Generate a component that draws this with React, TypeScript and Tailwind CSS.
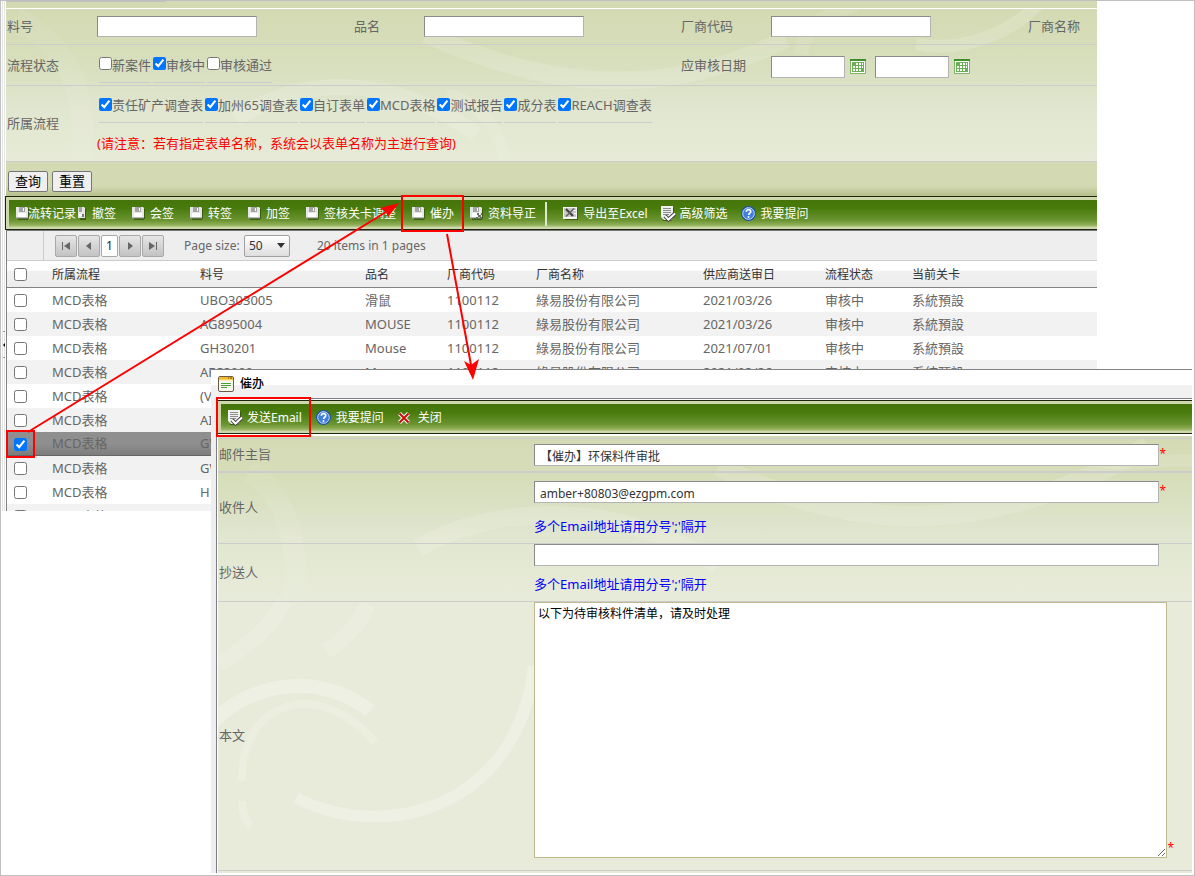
import { useState } from "react";
import type { ReactNode } from "react";

type Row = {
  id: number;
  partNo: string;
  name: string;
  code: string;
  vendor: string;
  date: string;
  status: string;
  step: string;
};

const vendorName = "綠易股份有限公司";

const rows: Row[] = [
  { id: 1, partNo: "UBO303005", name: "滑鼠", code: "1100112", vendor: vendorName, date: "2021/03/26", status: "审核中", step: "系統預設" },
  { id: 2, partNo: "AG895004", name: "MOUSE", code: "1100112", vendor: vendorName, date: "2021/03/26", status: "审核中", step: "系統預設" },
  { id: 3, partNo: "GH30201", name: "Mouse", code: "1100112", vendor: vendorName, date: "2021/07/01", status: "审核中", step: "系統預設" },
  { id: 4, partNo: "AFC2000", name: "M", code: "1100112", vendor: vendorName, date: "2021/03/26", status: "审核中", step: "系統預設" },
  { id: 5, partNo: "(V", name: "", code: "", vendor: "", date: "", status: "", step: "" },
  { id: 6, partNo: "AI", name: "", code: "", vendor: "", date: "", status: "", step: "" },
  { id: 7, partNo: "GW", name: "", code: "", vendor: "", date: "", status: "", step: "" },
  { id: 8, partNo: "GW", name: "", code: "", vendor: "", date: "", status: "", step: "" },
  { id: 9, partNo: "H", name: "", code: "", vendor: "", date: "", status: "", step: "" },
  { id: 10, partNo: "", name: "", code: "", vendor: "", date: "", status: "", step: "" },
];

const statusList = [
  { label: "新案件", checked: false },
  { label: "审核中", checked: true },
  { label: "审核通过", checked: false },
];

const flowList = ["责任矿产调查表", "加州65调查表", "自订表单", "MCD表格", "测试报告", "成分表", "REACH调查表"];

const inputStyle =
  "border border-t-[#8a8a8a] border-l-[#8a8a8a] border-r-[#b4b4b4] border-b-[#b4b4b4] bg-white text-xs text-[#333] focus:outline-none";

const panelBg =
  "bg-[linear-gradient(to_bottom,#d3dab3_0px,#d6ddb9_40px,#dbe2c5_75px,#e1e6d0_100px,#e4e9d4_130px,#e8ebda_170px)]";

/* ---------- Icons ---------- */

const SaveIcon = ({ mark = false }: { mark?: boolean }) => (
  <svg width="13" height="13" viewBox="0 0 13 13" className="shrink-0" aria-hidden="true">
    <path d="M2 2h11v10h-1v1H2z" fill="#2c4a08" opacity=".7" />
    <path d="M0 0h11l1 1v10H0z" fill="#e6e6e6" />
    <path d="M3 0h6v5H3z" fill="#a4a4a4" />
    <path d="M7 1h1v3H7z" fill="#fff" />
    <path d="M2 6h8v4H2z" fill="#fff" />
    <path d="M0 11h12" stroke="#8c8c8c" />
    {mark && <path d="M7 6h2v2h2V6h1v2h-1v2h1v2h-2v-2H8v2H6v-2h2V8H7z" fill="#6b6b6b" />}
  </svg>
);

const SaveIconHalf = () => (
  <svg width="8" height="13" viewBox="0 0 8 13" className="shrink-0" aria-hidden="true">
    <path d="M2 2h6v11H2z" fill="#2c4a08" opacity=".7" />
    <path d="M0 0h6l1 1v10H0z" fill="#e6e6e6" />
    <path d="M1 0h3v5H1z" fill="#a4a4a4" />
    <path d="M1 7h3v2H1z" fill="#fff" />
    <path d="M4 7h2v3H4z" fill="#777" />
  </svg>
);

const ExcelIcon = () => (
  <svg width="15" height="13" viewBox="0 0 15 13" className="shrink-0" aria-hidden="true">
    <path d="M2 2h13v11H2z" fill="#2c4a08" opacity=".7" />
    <path d="M0 0h14v12H0z" fill="#f4f4f4" />
    <path d="M1 1h12v10H1z" fill="#c9c9c9" />
    <path d="M1 10h12v1H1z" fill="#fff" />
    <path d="M3 2l7 7" stroke="#444" strokeWidth="2.200" />
    <path d="M11 1.500L3 9.500" stroke="#666" strokeWidth="1.600" />
    <path d="M10.500 3.500H13M11 6.500h2" stroke="#fff" />
  </svg>
);

const DocCheckIcon = () => (
  <svg width="15" height="16" viewBox="0 0 15 16" className="shrink-0" aria-hidden="true">
    <path d="M2 2h11v9l-3 4H2z" fill="#2c4a08" opacity=".7" />
    <path d="M0 0h12v12l-2 2H3l-3-3z" fill="#f0f0f0" />
    <path d="M2 2.500h8M2 4.500h8M2 6.500h8M2 8.500h6" stroke="#8d8d8d" />
    <path d="M4 10l3.500 3.500L14 7.500" fill="none" stroke="#444" strokeWidth="4" />
    <path d="M4 10l3.500 3.500L14 7.500" fill="none" stroke="#fff" strokeWidth="2" />
  </svg>
);

const HelpIcon = () => (
  <svg width="15" height="15" viewBox="0 0 15 15" className="shrink-0" aria-hidden="true">
    <circle cx="7.500" cy="7.500" r="7.500" fill="#1d55a8" />
    <circle cx="7.500" cy="7.500" r="5.800" fill="#3f7fdc" stroke="#cfe0fa" />
    <path d="M5.300 5.800c0-3 4.600-2.800 4.400 0-.1 1.400-2 1.500-2.100 3.200" fill="none" stroke="#fff" strokeWidth="1.700" />
    <circle cx="7.500" cy="11" r="1" fill="#fff" />
  </svg>
);

const CloseIcon = () => (
  <svg width="12" height="12" viewBox="0 0 12 12" className="shrink-0" aria-hidden="true">
    <path d="M1.500 1.500l9 9M10.500 1.500l-9 9" stroke="#fff" strokeWidth="4" />
    <path d="M1.500 1.500l9 9M10.500 1.500l-9 9" stroke="#c8140c" strokeWidth="2.200" />
  </svg>
);

const CalendarIcon = () => (
  <svg width="16" height="15" viewBox="0 0 16 15" aria-hidden="true">
    <rect width="16" height="15" rx="1" fill="#7db868" />
    <path d="M0 0h16v2H0z" fill="#3d8f2c" />
    <path d="M1 2h14v12H1z" fill="#fff" />
    <path d="M2 3h12v10H2z" fill="#6cb055" />
    <path d="M6 4h2v2H6zM9 4h2v2H9zM12 4h1v2h-1zM3 7h2v2H3zM6 7h2v2H6zM9 7h2v2H9zM12 7h1v2h-1zM3 10h2v2H3zM6 10h2v2H6zM9 10h2v2H9z" fill="#fff" />
  </svg>
);

const FormIcon = () => (
  <svg width="16" height="16" viewBox="0 0 16 16" className="shrink-0" aria-hidden="true">
    <rect x=".5" y=".5" width="15" height="15" rx="1.500" fill="#f7f7f0" stroke="#6b5a4a" />
    <path d="M1 1h14v3H1z" fill="#f3b92e" />
    <path d="M1 4h14" stroke="#fbe08a" />
    <path d="M10 2h1M12 2h2" stroke="#7a4b00" />
    <path d="M3 7.500h10M3 9.500h10M3 11.500h6" stroke="#4d9a3a" />
  </svg>
);

const MainSwirls = () => (
  <svg className="absolute inset-0 w-full h-full pointer-events-none" fill="none" stroke="#fff" aria-hidden="true">
    <path d="M10 10C50 30 85 70 75 150" strokeWidth="22" opacity=".07" />
    <path d="M230 110C290 70 380 60 470 125" strokeWidth="16" opacity=".14" />
    <path d="M420 25C520 70 640 100 780 30" strokeWidth="18" opacity=".14" />
    <path d="M440 85C470 90 495 120 498 150" strokeWidth="12" opacity=".1" />
    <path d="M910 35C960 45 1010 20 1035 -8" strokeWidth="13" opacity=".16" />
    <path d="M795 45C800 15 820 5 850 -5" strokeWidth="14" opacity=".1" />
  </svg>
);

const DialogSwirls = () => (
  <svg className="absolute inset-0 w-full h-full pointer-events-none" fill="none" stroke="#fff" aria-hidden="true">
    <path d="M30 35C60 50 85 100 75 165" strokeWidth="22" opacity=".07" />
    <path d="M200 112C270 70 400 60 500 130" strokeWidth="18" opacity=".14" />
    <path d="M500 30C620 90 760 110 930 10" strokeWidth="20" opacity=".14" />
    <path d="M0 228C30 210 55 190 66 165M108 215C125 205 140 190 150 168" strokeWidth="16" opacity=".15" />
    <path d="M-5 286C40 240 110 240 152 275" strokeWidth="14" opacity=".28" />
    <path d="M24 345C22 265 100 240 157 306M24 365C24 375 27 385 33 390" strokeWidth="8" opacity=".18" />
    <path d="M78 362C170 408 300 370 316 230" strokeWidth="12" opacity=".24" />
    <path d="M860 15C900 40 940 20 975 25" strokeWidth="12" opacity=".12" />
  </svg>
);

/* ---------- Small parts ---------- */

const ToolButton = ({ icon, label, slot = "w-[18px]" }: { icon: ReactNode; label: string; slot?: string }) => (
  <button type="button" className="flex items-center shrink-0 text-xs leading-4 text-white cursor-pointer whitespace-nowrap">
    <span className={`${slot} shrink-0 flex items-center`}>{icon}</span>
    {label}
  </button>
);

const ToolBar = ({ children }: { children: ReactNode }) => (
  <div className="border border-[#1c260c] border-r-0 bg-[#cfd8ac] pl-[3px] pt-[3px] pb-[2px]">
    <div className="flex items-center h-[27px] bg-[linear-gradient(to_bottom,#45750a_0%,#487a0c_30%,#6a9430_75%,#8fae58_92%,#b9cb8c_100%)]">
      {children}
    </div>
  </div>
);

const CheckItem = ({ id, label, defaultChecked }: { id: string; label: string; defaultChecked: boolean }) => (
  <div className="flex items-center h-[35px] border-b border-[#ccc]">
    <input id={id} type="checkbox" defaultChecked={defaultChecked} className="size-[13px] m-0 mb-[2px] shrink-0" />
    <label htmlFor={id} className="leading-5 whitespace-nowrap">{label}</label>
  </div>
);

const PagerButton = ({ title, d }: { title: string; d: string }) => (
  <button
    type="button"
    aria-label={title}
    className="w-[22px] h-[22px] flex items-center justify-center rounded-xs border border-[#a9a9a9] bg-linear-to-b from-[#e6e6e6] to-[#c3c3c3]"
  >
    <svg width="10" height="10" viewBox="0 0 10 10" fill="#666" aria-hidden="true">
      <path d={d} />
    </svg>
  </button>
);

const Required = () => <span className="text-[#f00] text-xs leading-5">*</span>;

/* ---------- Search form ---------- */

const searchGrid = "relative grid grid-cols-[91px_1fr_70px_1fr_90px_1fr_69px] items-center border-b border-[#ccc]";

const SearchForm = () => (
  <form className="ml-px text-[13px] text-[#666]">
    <div className={`relative overflow-hidden border-t border-white ${panelBg}`}>
      <MainSwirls />
      <div className={`${searchGrid} h-9`}>
        <label htmlFor="partNo" className="pl-px">料号</label>
        <input id="partNo" type="text" className={`${inputStyle} w-40 h-[21px]`} />
        <label htmlFor="productName">品名</label>
        <input id="productName" type="text" className={`${inputStyle} w-40 h-[21px]`} />
        <label htmlFor="vendorCode">厂商代码</label>
        <input id="vendorCode" type="text" className={`${inputStyle} w-40 h-[21px]`} />
        <span>厂商名称</span>
      </div>
      <div className={`${searchGrid} h-[41px]`}>
        <span className="pl-px pt-[2px]">流程状态</span>
        <div className="col-span-3 flex gap-[2px] pl-[2px] h-[35px]">
          {statusList.map((item, index) => (
            <CheckItem key={item.label} id={`status${index}`} label={item.label} defaultChecked={item.checked} />
          ))}
        </div>
        <label htmlFor="dateFrom" className="pt-[2px]">应审核日期</label>
        <div className="col-span-2 flex items-center pt-[3px]">
          <input id="dateFrom" type="text" className={`${inputStyle} w-[74px] h-[22px]`} />
          <button type="button" aria-label="开始日期" className="mx-[5px]"><CalendarIcon /></button>
          <input type="text" aria-label="结束日期" className={`${inputStyle} ml-1 w-[74px] h-[22px]`} />
          <button type="button" aria-label="选择结束日期" className="mx-[5px]"><CalendarIcon /></button>
        </div>
      </div>
      <div className={`${searchGrid} h-[76px]`}>
        <span className="pl-px">所属流程</span>
        <div className="col-span-6 self-start pt-[2px]">
          <div className="flex gap-[2px] pl-[2px]">
            {flowList.map((label, index) => (
              <CheckItem key={label} id={`flow${index}`} label={label} defaultChecked />
            ))}
          </div>
          <p className="leading-10 h-9 text-[#f00]">(请注意：若有指定表单名称，系统会以表单名称为主进行查询)</p>
        </div>
      </div>
    </div>
    <div className="flex gap-1 pl-[2px] pt-[9px] pb-1 bg-[linear-gradient(to_bottom,#d3dab3_70%,#b7bf8c_100%)]">
      <button type="button" className="w-10 h-[21px] rounded-xs border border-[#767676] bg-[#efefef] leading-[19px] text-black">查询</button>
      <button type="button" className="w-10 h-[21px] rounded-xs border border-[#767676] bg-[#efefef] leading-[19px] text-black">重置</button>
    </div>
  </form>
);

/* ---------- Grid ---------- */

const GridTable = () => {
  const [selected, setSelected] = useState<number[]>([7]);

  const toggle = (id: number) =>
    setSelected((old) => (old.includes(id) ? old.filter((x) => x !== id) : [...old, id]));

  const columns = (
    <colgroup>
      <col className="w-[45px]" />
      <col className="w-[148px]" />
      <col className="w-[165px]" />
      <col className="w-[82px]" />
      <col className="w-[89px]" />
      <col className="w-[167px]" />
      <col className="w-[122px]" />
      <col className="w-[87px]" />
      <col />
    </colgroup>
  );

  return (
    <div className="ml-px border-l border-[#828282]">
      <div className="flex items-center h-[31px] bg-[#eee] border-t border-t-[#777] border-b border-b-[#ccc] text-xs text-[#666]">
        <div className="w-[37px] h-full border-r border-[#ccc]" />
        <div className="flex gap-px ml-[11px]">
          <PagerButton title="首页" d="M1 1h1v8H1zM9 1v8L3 5z" />
          <PagerButton title="上一页" d="M7 1v8L2 5z" />
          <button type="button" className="w-[17px] h-[22px] rounded-xs border border-[#a9a9a9] bg-white text-[#222]">1</button>
          <PagerButton title="下一页" d="M3 1v8l5-4z" />
          <PagerButton title="末页" d="M8 1h1v8H8zM1 1v8l6-4z" />
        </div>
        <label htmlFor="pageSize" className="ml-5 w-[60px] whitespace-nowrap">Page size:</label>
        <div className="relative">
          <select id="pageSize" className="appearance-none w-[46px] h-[22px] pl-1 rounded-xs border border-[#a0a0a0] bg-linear-to-b from-white to-[#dedede] text-[#333]">
            <option>50</option>
          </select>
          <svg width="8" height="5" viewBox="0 0 8 5" fill="#333" className="absolute right-[5px] top-2 pointer-events-none" aria-hidden="true">
            <path d="M0 0h8L4 5z" />
          </svg>
        </div>
        <span className="ml-[27px]">20 items in 1 pages</span>
      </div>

      <table className="w-full table-fixed text-xs text-[#333] bg-[linear-gradient(to_bottom,#fff_0%,#fff_35%,#f0f0f0_40%,#ededed_100%)]">
        {columns}
        <thead>
          <tr className="h-[26px] border-b border-[#828282] text-left">
            <th className="pl-[7px] pt-[2px]"><input type="checkbox" aria-label="全选" className="block size-[13px] m-0" /></th>
            {["所属流程", "料号", "品名", "厂商代码", "厂商名称", "供应商送审日", "流程状态", "当前关卡"].map((head) => (
              <th key={head} className="pt-[3px] font-normal whitespace-nowrap">{head}</th>
            ))}
          </tr>
        </thead>
      </table>
      <div className="h-[223px] overflow-hidden">
        <table className="w-full table-fixed text-[13px] leading-5 text-[#666]">
          {columns}
          <tbody>
            {rows.map((row) => (
              <tr
                key={row.id}
                className={
                  selected.includes(row.id)
                    ? "h-6 bg-[linear-gradient(to_bottom,#8f8f8f_50%,#7d7d7d_100%)] border-b border-[#666]"
                    : "h-6 odd:bg-white even:bg-[#f2f2f2]"
                }
              >
                <td className="pl-[7px] pt-[2px]">
                  <input
                    type="checkbox"
                    aria-label={`选择 ${row.id}`}
                    checked={selected.includes(row.id)}
                    onChange={() => toggle(row.id)}
                    className="block size-[13px] m-0"
                  />
                </td>
                <td>MCD表格</td>
                <td>{row.partNo}</td>
                <td>{row.name}</td>
                <td>{row.code}</td>
                <td className="whitespace-nowrap">{row.vendor}</td>
                <td>{row.date}</td>
                <td>{row.status}</td>
                <td>{row.step}</td>
              </tr>
            ))}
          </tbody>
        </table>
      </div>
    </div>
  );
};

/* ---------- Dialog ---------- */

const RemindDialog = () => {
  const [subject, setSubject] = useState<string>("【催办】环保料件审批");
  const [to, setTo] = useState<string>("amber+80803@ezgpm.com");
  const [body, setBody] = useState<string>("以下为待审核料件清单，请及时处理");

  return (
    <section role="dialog" aria-label="催办" className="absolute left-[210px] right-[2px] top-[368px] bg-[#eee] border-t border-[#828282]">
      <div className="flex items-center gap-[6px] h-7 pl-[7px] bg-[linear-gradient(to_bottom,#fff_55%,#f1f1f1_55%)]">
        <FormIcon />
        <h2 className="text-xs font-medium text-black">催办</h2>
      </div>
      <div className="ml-[5px] border-l border-t border-[#7d7d88] bg-white pt-px">
        <ToolBar>
          <div className="flex items-center pl-[7px] gap-[14px]">
            <ToolButton icon={<DocCheckIcon />} label="发送Email" slot="w-[19px]" />
            <ToolButton icon={<HelpIcon />} label="我要提问" slot="w-5" />
            <ToolButton icon={<CloseIcon />} label="关闭" slot="w-5" />
          </div>
        </ToolBar>
        <form className={`relative overflow-hidden mt-[2px] ml-px text-[13px] text-[#666] ${panelBg}`}>
          <DialogSwirls />
          <div className="relative border-t border-[#ccc] mt-[2px] grid grid-cols-[316px_1fr] items-center h-[35px] border-b-2 border-b-[#ccc]">
            <label htmlFor="subject" className="pl-px">邮件主旨</label>
            <div className="flex pr-[26px]">
              <input id="subject" value={subject} onChange={(e) => setSubject(e.target.value)} type="text" className={`${inputStyle} flex-1 min-w-0 h-[22px] px-[5px] pt-[2px]`} />
              <Required />
            </div>
          </div>
          <div className="relative grid grid-cols-[316px_1fr] items-center border-b border-[#ccc]">
            <label htmlFor="to" className="pl-px">收件人</label>
            <div className="pt-2">
              <div className="flex pr-[26px]">
                <input id="to" value={to} onChange={(e) => setTo(e.target.value)} type="text" className={`${inputStyle} flex-1 min-w-0 h-[22px] px-[5px] pt-[2px]`} />
                <Required />
              </div>
              <p className="h-[40px] leading-[46px] text-[#00f]">多个Email地址请用分号';'隔开</p>
            </div>
          </div>
          <div className="relative grid grid-cols-[316px_1fr] items-center border-b border-[#ccc]">
            <label htmlFor="cc" className="pl-px">抄送人</label>
            <div>
              <div className="flex pr-[33px]">
                <input id="cc" type="text" className={`${inputStyle} flex-1 min-w-0 h-[22px] px-[5px]`} />
              </div>
              <p className="h-[35px] leading-9 text-[#00f]">多个Email地址请用分号';'隔开</p>
            </div>
          </div>
          <div className="relative grid grid-cols-[316px_1fr] items-center border-b border-[#ccc]">
            <label htmlFor="body" className="pl-px">本文</label>
            <div className="flex items-end pr-[18px] pb-3">
              <textarea id="body" value={body} onChange={(e) => setBody(e.target.value)} className="flex-1 min-w-0 h-64 border border-[#c0b890] bg-white px-[3px] pt-[3px] text-xs leading-4 text-black focus:outline-none resize" />
              <Required />
            </div>
          </div>
          <div className="h-[2px]" />
        </form>
      </div>
    </section>
  );
};

/* ---------- Arrows and frames over both windows ---------- */

const Annotations = () => (
  <svg className="absolute left-[-1px] top-[-1px] pointer-events-none" width="500" height="480" fill="none" aria-hidden="true">
    <g stroke="#f00" strokeWidth="2">
      <rect x="402" y="196" width="61" height="35" />
      <rect x="7" y="431" width="27" height="26" />
      <rect x="217" y="398" width="93" height="38" />
      <path d="M28 432L386 212M447 234L471 365" />
    </g>
    <path d="M399 203L388 217L386 212L380 208Z" fill="#f00" />
    <path d="M473 380L464 361L471 365L479 359Z" fill="#f00" />
  </svg>
);

const App = () => {
  return (
    <main className="relative min-h-screen border border-[#c0c0c0] bg-white overflow-hidden font-['Noto_Sans','Noto_Sans_CJK_SC',sans-serif]">
      <div className="flex mr-[97px]">
        <div className="w-[3px] shrink-0 ml-px border-x border-[#e4e4e4] h-[510px] flex flex-col">
          <div className="mt-[330px] h-[27px] -mr-px border-y border-[#999] flex items-center">
            <svg width="3" height="6" viewBox="0 0 3 6" aria-hidden="true"><path d="M3 0v6L0 3z" fill="#000" /></svg>
          </div>
        </div>
        <div className="flex-1 min-w-0">
          <div className="ml-px h-[7px] bg-[#d3dab3]">
            <div className="h-px w-40 bg-[#c0c0c0]" />
          </div>
          <SearchForm />
          <ToolBar>
            <div className="flex items-center pl-[7px]">
              <div className="flex items-center mr-[2px]">
                <ToolButton icon={<SaveIcon />} label="流转记录" slot="w-3" />
              </div>
              <div className="flex items-center gap-4">
                <ToolButton icon={<SaveIconHalf />} label="撤签" slot="w-[14px]" />
                <ToolButton icon={<SaveIcon />} label="会签" />
                <ToolButton icon={<SaveIcon />} label="转签" />
                <ToolButton icon={<SaveIcon />} label="加签" />
                <ToolButton icon={<SaveIcon />} label="签核关卡调整" />
                <ToolButton icon={<SaveIcon />} label="催办" />
                <ToolButton icon={<SaveIcon mark />} label="资料导正" />
              </div>
              <div className="w-[2px] h-6 bg-[#dfe8cc] ml-[9px] mr-4" />
              <div className="flex items-center gap-[13px]">
                <ToolButton icon={<ExcelIcon />} label="导出至Excel" slot="w-5" />
                <ToolButton icon={<DocCheckIcon />} label="高级筛选" slot="w-[19px]" />
                <ToolButton icon={<HelpIcon />} label="我要提问" slot="w-5" />
              </div>
            </div>
          </ToolBar>
          <GridTable />
        </div>
      </div>
      <RemindDialog />
      <Annotations />
    </main>
  );
};

export default App;
